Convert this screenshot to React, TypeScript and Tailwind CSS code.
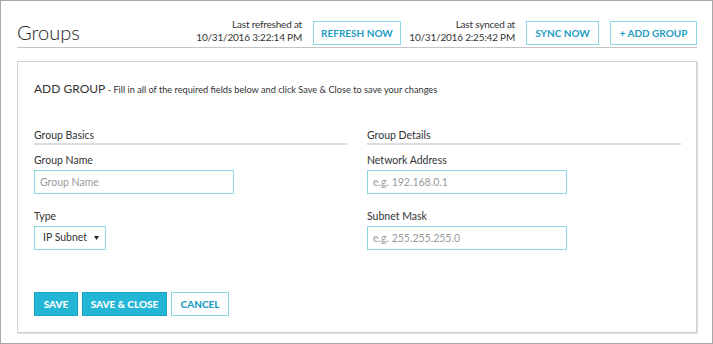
import React from "react";

const font = { fontFamily: "Lato, 'Open Sans', Arial, sans-serif" };

function HeaderButton({ label, w }: { label: string; w: string }) {
  return (
    <button
      className={`${w} h-[24px] border border-[#8fd6e8] bg-white text-[10px] font-bold text-[#1c9dc3] flex items-center justify-center whitespace-nowrap`}
    >
      {label}
    </button>
  );
}

function Stamp({ top, date }: { top: string; date: string }) {
  return (
    <div className="w-[104px] flex flex-col items-end text-[10px] tracking-[-0.2px] leading-[13px] text-[#333] whitespace-nowrap pb-[1px]">
      <div>{top}</div>
      <div>{date}</div>
    </div>
  );
}

function Field({ label, placeholder }: { label: string; placeholder: string }) {
  return (
    <div className="flex flex-col">
      <div className="text-[10.5px] leading-[14px] text-[#333]">{label}</div>
      <input
        placeholder={placeholder}
        className="mt-[3px] w-[200px] h-[24px] border border-[#8fd6e8] px-[5px] text-[10.5px] text-[#333] placeholder:text-[#9a9a9a] outline-none"
        style={font}
      />
    </div>
  );
}

export default function App() {
  return (
    <div
      className="w-[713px] h-[344px] border border-[#a8a8a8] bg-white overflow-hidden"
      style={font}
    >
      {/* header */}
      <div className="ml-[16px] w-[680px] pt-[17px] pb-[2px] border-b border-[#c4c4c4] flex items-end justify-between">
        <div className="text-[20px] leading-[24px] font-light text-[#222] pb-[1px]">Groups</div>
        <div className="flex items-end">
          <Stamp top="Last refreshed at" date="10/31/2016 3:22:14 PM" />
          <div className="ml-[11px]">
            <HeaderButton label="REFRESH NOW" w="w-[88px]" />
          </div>
          <div className="ml-[10px]">
            <Stamp top="Last synced at" date="10/31/2016 2:25:42 PM" />
          </div>
          <div className="ml-[11px]">
            <HeaderButton label="SYNC NOW" w="w-[73px]" />
          </div>
          <div className="ml-[11px]">
            <HeaderButton label="+ ADD GROUP" w="w-[87px]" />
          </div>
        </div>
      </div>

      {/* panel */}
      <div className="ml-[16px] mt-[13px] w-[680px] h-[272px] border border-[#d2d2d2] shadow-[1px_1px_0_#dedede] pl-[16px] pr-[15px] pt-[17px]">
        <div className="leading-[16px] text-[#333] whitespace-nowrap">
          <span className="text-[12px]">ADD GROUP</span>
          <span className="text-[9.2px]"> - Fill in all of the required fields below and click Save &amp; Close to save your changes</span>
        </div>

        <div className="mt-[30px] flex gap-[20px]">
          <div className="w-[313px]">
            <div className="text-[10.5px] leading-[14px] text-[#333] pb-[1px] border-b-2 border-[#dcdcdc]">Group Basics</div>
            <div className="mt-[8px]">
              <Field label="Group Name" placeholder="Group Name" />
            </div>
            <div className="mt-[15px] flex flex-col">
              <div className="text-[10.5px] leading-[14px] text-[#333]">Type</div>
              <div className="mt-[3px] w-[72px] h-[24px] border border-[#8fd6e8] flex items-center justify-between pl-[8px] pr-[6px] text-[10.5px] text-[#333]">
                <span>IP Subnet</span>
                <svg width="5" height="4" viewBox="0 0 5 4">
                  <path d="M0 0 L5 0 L2.5 4 Z" fill="#222" />
                </svg>
              </div>
            </div>
          </div>
          <div className="w-[314px]">
            <div className="text-[10.5px] leading-[14px] text-[#333] pb-[1px] border-b-2 border-[#dcdcdc]">Group Details</div>
            <div className="mt-[8px]">
              <Field label="Network Address" placeholder="e.g. 192.168.0.1" />
            </div>
            <div className="mt-[15px]">
              <Field label="Subnet Mask" placeholder="e.g. 255.255.255.0" />
            </div>
          </div>
        </div>

        <div className="mt-[42px] flex gap-[4px]">
          <button className="w-[44px] h-[24px] bg-[#22b5d6] border border-[#1aa3c2] text-white text-[10px] font-black flex items-center justify-center">
            SAVE
          </button>
          <button className="w-[85px] h-[24px] bg-[#22b5d6] border border-[#1aa3c2] text-white text-[10px] font-black flex items-center justify-center whitespace-nowrap">
            SAVE &amp; CLOSE
          </button>
          <button className="w-[58px] h-[24px] bg-white border border-[#8fd6e8] text-[#1c9dc3] text-[10px] font-black flex items-center justify-center">
            CANCEL
          </button>
        </div>
      </div>
    </div>
  );
}
